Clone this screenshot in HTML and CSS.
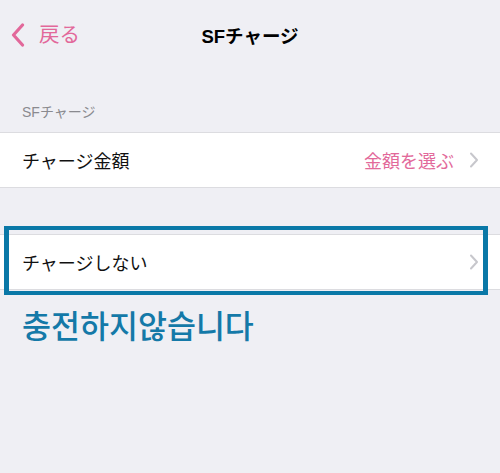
FILE: index.html
```html
<!DOCTYPE html>
<html lang="ja">
<head>
<meta charset="utf-8">
<link rel="stylesheet" href="styles.css">
</head>
<body>
<div class="screen">
  <header class="nav">
    <div class="back">
      <svg class="back-chev" width="14" height="24" viewBox="0 0 14 24"><path d="M11.5 2 L2.5 12 L11.5 22" fill="none" stroke="#e2689a" stroke-width="3.2" stroke-linecap="round" stroke-linejoin="round"/></svg>
      <span class="back-label">戻る</span>
    </div>
    <div class="nav-title">SFチャージ</div>
  </header>

  <div class="section-header">SFチャージ</div>
  <div class="group">
    <div class="row">
      <span class="row-label">チャージ金額</span>
      <span class="row-value">金額を選ぶ</span>
      <svg class="chev" width="10" height="16" viewBox="0 0 10 16"><path d="M2 1.5 L8 8 L2 14.5" fill="none" stroke="#c7c7cc" stroke-width="2" stroke-linecap="round" stroke-linejoin="round"/></svg>
    </div>
  </div>

  <div class="highlight-wrap">
    <div class="group">
      <div class="row">
        <span class="row-label">チャージしない</span>
        <svg class="chev" width="10" height="16" viewBox="0 0 10 16"><path d="M2 1.5 L8 8 L2 14.5" fill="none" stroke="#c7c7cc" stroke-width="2" stroke-linecap="round" stroke-linejoin="round"/></svg>
      </div>
    </div>
    <div class="highlight-box"></div>
  </div>

  <div class="note">충전하지않습니다</div>
</div>
</body>
</html>
```

FILE: styles.css
```css
* { box-sizing: border-box; }
html, body { margin: 0; padding: 0; }
body {
  background: #efeff4;
  font-family: "Liberation Sans", "Noto Sans CJK JP", sans-serif;
  width: 500px;
  height: 473px;
  overflow: hidden;
}
.screen { display: flex; flex-direction: column; }
.nav {
  height: 70px;
  display: flex;
  align-items: center;
  justify-content: center;
  position: relative;
}
.back {
  position: absolute;
  left: 11px;
  top: 23px;
  display: flex;
  align-items: center;
  gap: 14px;
  color: #e2689a;
}
.back-label { font-size: 20.5px; line-height: 24px; }
.nav-title {
  font-size: 18.5px;
  font-weight: bold;
  color: #000;
}
.section-header {
  padding: 33px 22px 10px;
  font-size: 14px;
  line-height: 19px;
  color: #8a8a8f;
}
.group {
  background: #fff;
  border-top: 1px solid #dcdce0;
  border-bottom: 1px solid #dcdce0;
}
.row {
  height: 54px;
  display: flex;
  align-items: center;
  padding: 0 21px 0 22px;
}
.row-label { font-size: 18px; color: #111; flex: 1; }
.row-value { font-size: 18px; color: #e2699a; margin-right: 15px; }
.chev { display: block; }
.highlight-wrap {
  position: relative;
  margin-top: 46px;
}
.highlight-box {
  position: absolute;
  left: 4px;
  top: -8px;
  width: 484px;
  height: 69px;
  border: 5px solid #0a78a7;
  border-top-width: 4px;
  border-bottom-width: 4px;
}
.note {
  padding: 13px 22px 0;
  font-family: "Noto Sans CJK KR", sans-serif;
  font-size: 31.5px;
  line-height: 42px;
  font-weight: 500;
  color: #1479a8;
}
```
